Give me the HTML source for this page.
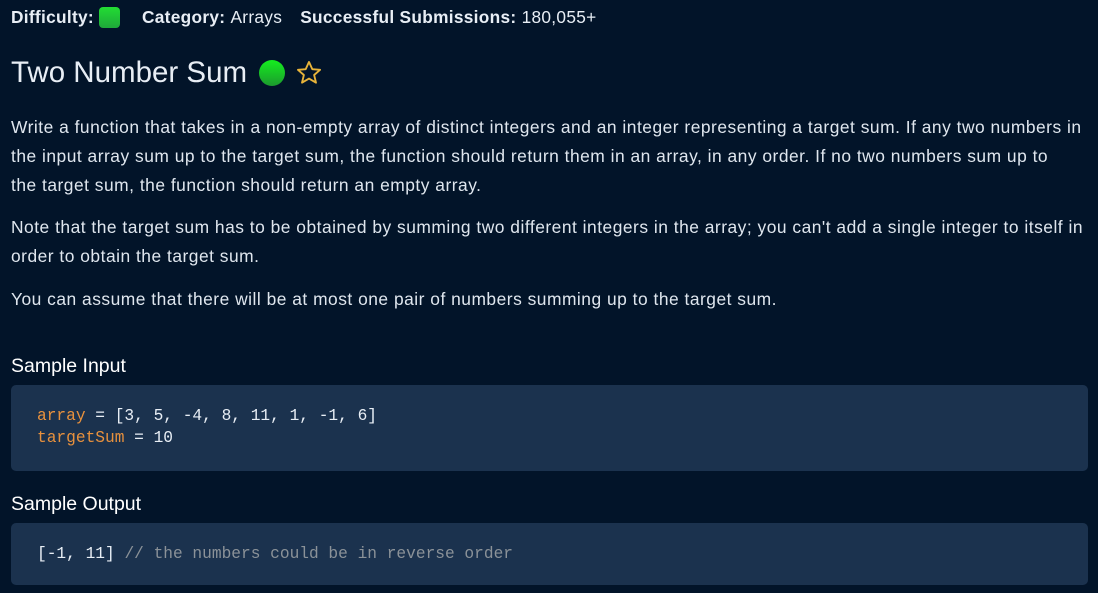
<!DOCTYPE html>
<html><head><meta charset="utf-8"><style>
*{margin:0;padding:0;box-sizing:border-box}
body{width:1098px;height:593px;overflow:hidden;background:#021429;color:#e8eef5;font-family:"Liberation Sans",sans-serif}
.top{position:absolute;left:11px;top:6px;font-size:17.3px;letter-spacing:0.3px;white-space:nowrap;display:flex;align-items:center;height:22px}
.top b{font-weight:bold}
.sq{display:inline-block;width:21px;height:21px;border-radius:4px;background:linear-gradient(#22dd33,#1fa83a);margin:0 0 0 5px;vertical-align:middle}
h1{position:absolute;left:11px;top:56px;font-size:29.5px;font-weight:normal;display:flex;align-items:center;white-space:nowrap}
.dot{display:inline-block;width:26px;height:26px;border-radius:50%;background:linear-gradient(#14ee1e,#1c9a2e);margin-left:12px}
p{position:absolute;left:11px;width:1085px;font-size:17.4px;letter-spacing:0.5px;line-height:28.8px;color:#dfe6ee;white-space:nowrap}
h2{position:absolute;left:11px;font-size:19.5px;font-weight:normal;color:#fff}
.code{position:absolute;left:11px;width:1077px;background:#1b324e;border-radius:5px;font-family:"Liberation Mono",monospace;font-size:16.2px;line-height:22px;padding-left:26px;color:#e8eef5;white-space:pre}
.o{color:#e8913d}.c{color:#8b9298}
</style></head><body>
<div class="top"><b>Difficulty:</b><span class="sq"></span><b style="margin-left:22px">Category:</b>&nbsp;Arrays<b style="margin-left:18px">Successful Submissions:</b>&nbsp;180,055+</div>
<h1>Two Number Sum<span class="dot"></span><svg width="28" height="28" viewBox="0 0 24 24" style="margin-left:10px"><path d="M12 2.5l2.8 6.2 6.7.6-5.1 4.4 1.6 6.6L12 16.8l-6 3.5 1.6-6.6-5.1-4.4 6.7-.6z" fill="none" stroke="#e8b43a" stroke-width="1.6" stroke-linejoin="round"/></svg></h1>
<p style="top:113px">Write a function that takes in a non-empty array of distinct integers and an integer representing a target sum. If any two numbers in<br>the input array sum up to the target sum, the function should return them in an array, in any order. If no two numbers sum up to<br>the target sum, the function should return an empty array.</p>
<p style="top:213px">Note that the target sum has to be obtained by summing two different integers in the array; you can't add a single integer to itself in<br>order to obtain the target sum.</p>
<p style="top:285px">You can assume that there will be at most one pair of numbers summing up to the target sum.</p>
<h2 style="top:355px">Sample Input</h2>
<div class="code" style="top:385px;height:86px;padding-top:20px"><span class="o">array</span> = [3, 5, -4, 8, 11, 1, -1, 6]
<span class="o">targetSum</span> = 10</div>
<h2 style="top:493px">Sample Output</h2>
<div class="code" style="top:523px;height:62px;padding-top:20px">[-1, 11] <span class="c">// the numbers could be in reverse order</span></div>
</body></html>
